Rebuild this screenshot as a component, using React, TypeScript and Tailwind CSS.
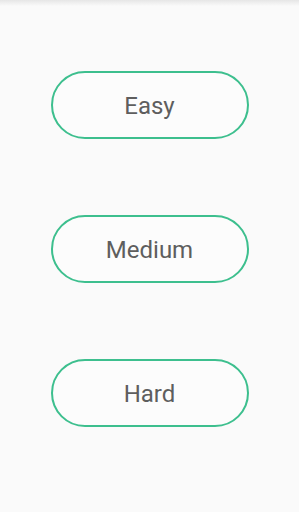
export default function App() {
  const levels = ["Easy", "Medium", "Hard"];
  return (
    <div className="h-[512px] w-[299px] overflow-hidden bg-[#fafafa] font-['Roboto',sans-serif]">
      <div className="h-[6px] bg-gradient-to-b from-[#e6e6e6] to-[#fafafa]" />
      <div className="flex flex-col items-center gap-[76px] pt-[65px]">
        {levels.map((l) => (
          <button
            key={l}
            className="flex h-[68px] w-[198px] items-center justify-center rounded-full border-2 border-[#3dbf8e] bg-[#fcfcfc] pt-[2px] text-[24px] text-[#5e5e5e]"
          >
            {l}
          </button>
        ))}
      </div>
    </div>
  );
}
